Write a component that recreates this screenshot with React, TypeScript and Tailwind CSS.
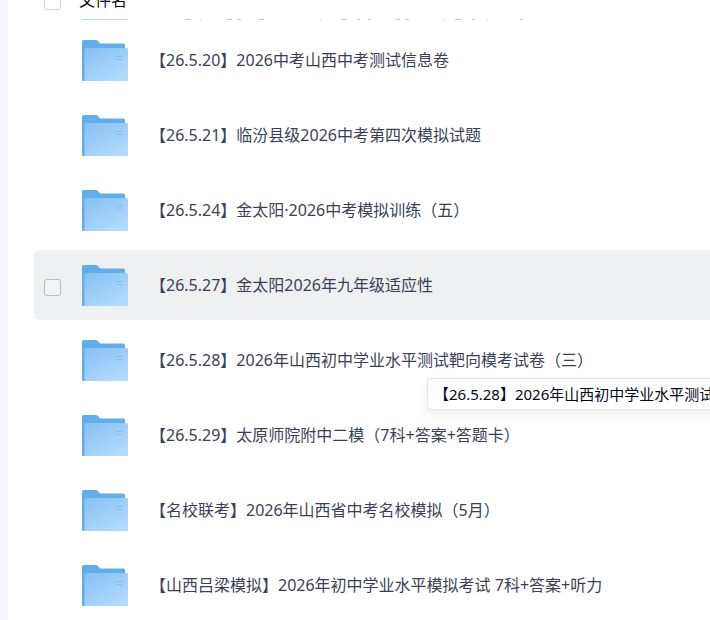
type FileItem = { name: string; active?: boolean };

const files: FileItem[] = [
  { name: "【26.5.20】2026中考山西中考测试信息卷" },
  { name: "【26.5.21】临汾县级2026中考第四次模拟试题" },
  { name: "【26.5.24】金太阳·2026中考模拟训练（五）" },
  { name: "【26.5.27】金太阳2026年九年级适应性", active: true },
  { name: "【26.5.28】2026年山西初中学业水平测试靶向模考试卷（三）" },
  { name: "【26.5.29】太原师院附中二模（7科+答案+答题卡）" },
  { name: "【名校联考】2026年山西省中考名校模拟（5月）" },
  { name: "【山西吕梁模拟】2026年初中学业水平模拟考试 7科+答案+听力" },
];

function FolderIcon() {
  return (
    <svg viewBox="0 -1 46 42" className="h-[42px] w-[46px] shrink-0" aria-hidden="true">
      <defs>
        <linearGradient id="folder-front" x1="0" y1="0" x2="0.7" y2="1">
          <stop offset="0" stopColor="#86c0f2" />
          <stop offset="0.6" stopColor="#a0cff9" />
          <stop offset="1" stopColor="#b2dafd" />
        </linearGradient>
      </defs>
      <path d="M0 1.500Q0 0 1.500 0H14Q15.500 0 16.500 1.500L18 3.500H41.500Q43 3.500 43 5V41H1Q0 41 0 40Z" fill="#62aeea" />
      <path d="M2.500 9.500Q2.500 8 4 8H44.500Q46 8 46 9.500V39.500Q46 41 44.500 41H2.500Z" fill="url(#folder-front)" />
      <path d="M34 16.500H40.500M35 19.500H40" stroke="#7fbaf0" strokeWidth="1" />
    </svg>
  );
}

// sliver of the row that is scrolled under the table header
function ScrolledRowEdge() {
  return (
    <div className="mb-[5px] flex h-px pl-12" aria-hidden="true">
      <div className="w-[46px] shrink-0 bg-[#b5dcf8]" />
      <svg className="ml-14 h-px w-[340px] shrink-0" viewBox="0 0 340 1">
        <path
          d="M1 .5h6M16 .5h1M43 .5h5M54 .5h3M75 .5h5M136 .5h1M157 .5h6M174 .5h2M184 .5h2M212 .5h4M222 .5h3M260 .5h1M271 .5h6M288 .5h2M303 .5h1M336 .5h2"
          stroke="#c6c7ca"
        />
      </svg>
    </div>
  );
}

function FileRow({ file }: { file: FileItem }) {
  return (
    <li
      className={
        file.active
          ? "flex h-[70px] items-center rounded-l-md bg-[#eff0f2] pl-2.5"
          : "flex h-[70px] items-center pl-2.5"
      }
    >
      <div className="flex w-[38px] shrink-0 pt-1">
        {file.active && (
          <input
            type="checkbox"
            aria-label={file.name}
            className="size-[17px] appearance-none rounded-[3px] border border-[#b9bcc2] bg-[#f3f4f5]"
          />
        )}
      </div>
      <FolderIcon />
      <a href="#" className="ml-[22px] text-base whitespace-nowrap">
        {file.name}
      </a>
    </li>
  );
}

export default function App() {
  return (
    <div className="relative overflow-hidden border-l-8 border-[#f5f9ff] bg-white pl-[26px] font-['Noto_Sans','Noto_Sans_CJK_SC',sans-serif] text-[#3a3f57]">
      <div className="flex h-[19px] items-end pl-2.5">
        <label className="flex items-end gap-[18px] text-base leading-6 whitespace-nowrap text-[#03081a]">
          <input
            type="checkbox"
            className="mb-[9px] size-[17px] appearance-none rounded-[3px] border border-[#d0d2d6]"
          />
          <span className="mb-[7px]">文件名</span>
        </label>
      </div>
      <ScrolledRowEdge />
      <ul className="space-y-[5px]">
        {files.map((file) => (
          <FileRow key={file.name} file={file} />
        ))}
      </ul>
      <div
        role="tooltip"
        className="absolute top-[378px] left-[419px] rounded border border-[#e4e5e8] bg-white py-1 pl-1.5 text-[15px] leading-[22px] whitespace-nowrap text-[#03081a] shadow-[0_4px_12px_rgba(0,0,0,0.07)]"
      >
        【26.5.28】2026年山西初中学业水平测试靶向模考试卷（三）
      </div>
    </div>
  );
}
